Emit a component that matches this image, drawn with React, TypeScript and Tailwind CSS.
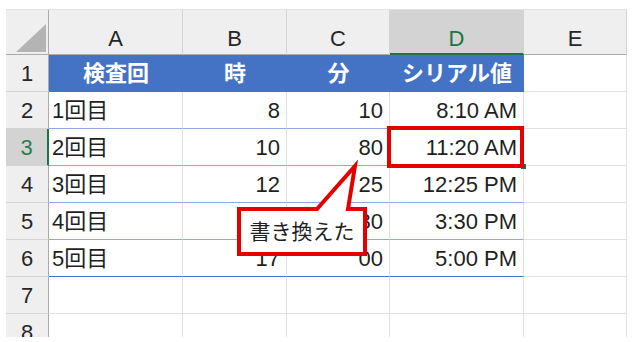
import type { ReactNode } from "react";

type Row = {
  num: number;
  cells?: [string, string, string, string];
  kind: "head" | "body" | "last" | "empty";
  active?: boolean;
};

const rows: Row[] = [
  { num: 1, kind: "head", cells: ["検査回", "時", "分", "シリアル値"] },
  { num: 2, kind: "body", cells: ["1回目", "8", "10", "8:10 AM"] },
  { num: 3, kind: "body", cells: ["2回目", "10", "80", "11:20 AM"], active: true },
  { num: 4, kind: "body", cells: ["3回目", "12", "25", "12:25 PM"] },
  { num: 5, kind: "body", cells: ["4回目", "15", "30", "3:30 PM"] },
  { num: 6, kind: "last", cells: ["5回目", "17", "00", "5:00 PM"] },
  { num: 7, kind: "empty" },
  { num: 8, kind: "empty" },
];

// widths of columns A..E, border included
const colW = ["w-[134px]", "w-[104px]", "w-[103px]", "w-[134px]", "w-[103px]"];

function ColHeader({ label, w, selected }: { label: string; w: string; selected?: boolean }) {
  return (
    <div
      className={
        selected
          ? `${w} flex h-full shrink-0 items-end justify-center border-r border-b-2 border-r-[#d4d4d4] border-b-[#217346] bg-[#d3d3d3] pb-[3px] text-[22px] leading-none text-[#217346]`
          : `${w} flex h-full shrink-0 items-end justify-center border-r border-b border-r-[#d4d4d4] border-b-[#ababab] bg-[#efefef] pb-[4px] text-[22px] leading-none text-[#262626]`
      }
    >
      {label}
    </div>
  );
}

function RowHeader({ num, active }: { num: number; active?: boolean }) {
  return (
    <div
      className={
        active
          ? "flex h-full w-[43px] shrink-0 items-center justify-center border-r-2 border-b border-r-[#217346] border-b-[#d4d4d4] bg-[#d3d3d3] text-[22px] text-[#2e7d4f]"
          : "flex h-full w-[43px] shrink-0 items-center justify-center border-r border-b border-r-[#ababab] border-b-[#d4d4d4] bg-[#efefef] text-[22px] text-[#262626]"
      }
    >
      {num}
    </div>
  );
}

function Cell({ w, line, right, children }: { w: string; line: string; right?: boolean; children?: ReactNode }) {
  return (
    <div
      className={`${w} ${line} flex h-full shrink-0 items-center overflow-hidden whitespace-nowrap border-r border-b border-r-[#e1e1e1] text-[22px] text-[#1f1f1f] ${
        right ? "justify-end pr-[6px]" : "justify-start pl-[3px]"
      }`}
    >
      {children}
    </div>
  );
}

function SheetRow({ row }: { row: Row }) {
  if (row.kind === "head" && row.cells) {
    return (
      <div className="flex h-[37px]">
        <RowHeader num={row.num} />
        {row.cells.map((text, i) => (
          <div
            key={text}
            className={`${colW[i]} flex h-full shrink-0 items-center justify-center border-b border-b-[#4472c4] bg-[#4472c4] text-[22px] font-bold text-white`}
          >
            {text}
          </div>
        ))}
        <Cell w={colW[4]} line="border-b-[#e1e1e1]" />
      </div>
    );
  }

  const line =
    row.kind === "body" ? "border-b-[#8ea9db]" : row.kind === "last" ? "border-b-[#4472c4]" : "border-b-[#e1e1e1]";

  return (
    <div className="flex h-[37px]">
      <RowHeader num={row.num} active={row.active} />
      {[0, 1, 2, 3].map((i) => (
        <Cell key={i} w={colW[i]} line={line} right={i > 0}>
          {row.cells?.[i]}
        </Cell>
      ))}
      <Cell w={colW[4]} line="border-b-[#e1e1e1]" />
    </div>
  );
}

function Callout() {
  return (
    <div className="absolute left-[230px] top-[160px] h-[100px] w-[145px]">
      <svg width="145" height="100" viewBox="0 0 145 100" className="absolute inset-0">
        <path
          d="M9 49 H87 L125 6 L118 49 H135 V94 H9 Z"
          fill="#ffffff"
          stroke="#e50000"
          strokeWidth={4}
          strokeLinejoin="miter"
          strokeMiterlimit={10}
        />
      </svg>
      <div className="absolute left-[9px] top-[49px] flex h-[45px] w-[126px] items-center justify-center text-[21px] text-[#1f1f1f]">
        書き換えた
      </div>
    </div>
  );
}

export default function App() {
  return (
    <div className="relative h-[342px] w-[633px] overflow-hidden bg-white font-['Liberation_Sans','Noto_Sans_CJK_JP',sans-serif]">
      <div className="pl-[6px] pt-[9px]">
        <div className="h-[328px] w-[621px] overflow-hidden">
          <div className="flex h-[46px] border-t border-t-[#e3e3e3]">
            <div className="flex h-full w-[43px] shrink-0 items-end justify-end border-r border-b border-r-[#ababab] border-b-[#ababab] bg-[#efefef] pb-[2px] pr-[2px]">
              <svg width="30" height="28" viewBox="0 0 30 28">
                <path d="M0 28 L30 28 L30 0 Z" fill="#b4b4b4" />
              </svg>
            </div>
            {["A", "B", "C", "D", "E"].map((c, i) => (
              <ColHeader key={c} label={c} w={colW[i]} selected={c === "D"} />
            ))}
          </div>
          {rows.map((r) => (
            <SheetRow key={r.num} row={r} />
          ))}
        </div>
      </div>

      {/* fill handle of the active cell */}
      <div className="absolute left-[521px] top-[164px] h-[5px] w-[5px] bg-[#217346]" />
      {/* highlight around D3 */}
      <div className="absolute left-[387px] top-[126px] h-[42px] w-[137px] border-4 border-[#e50000]" />
      <Callout />
    </div>
  );
}
